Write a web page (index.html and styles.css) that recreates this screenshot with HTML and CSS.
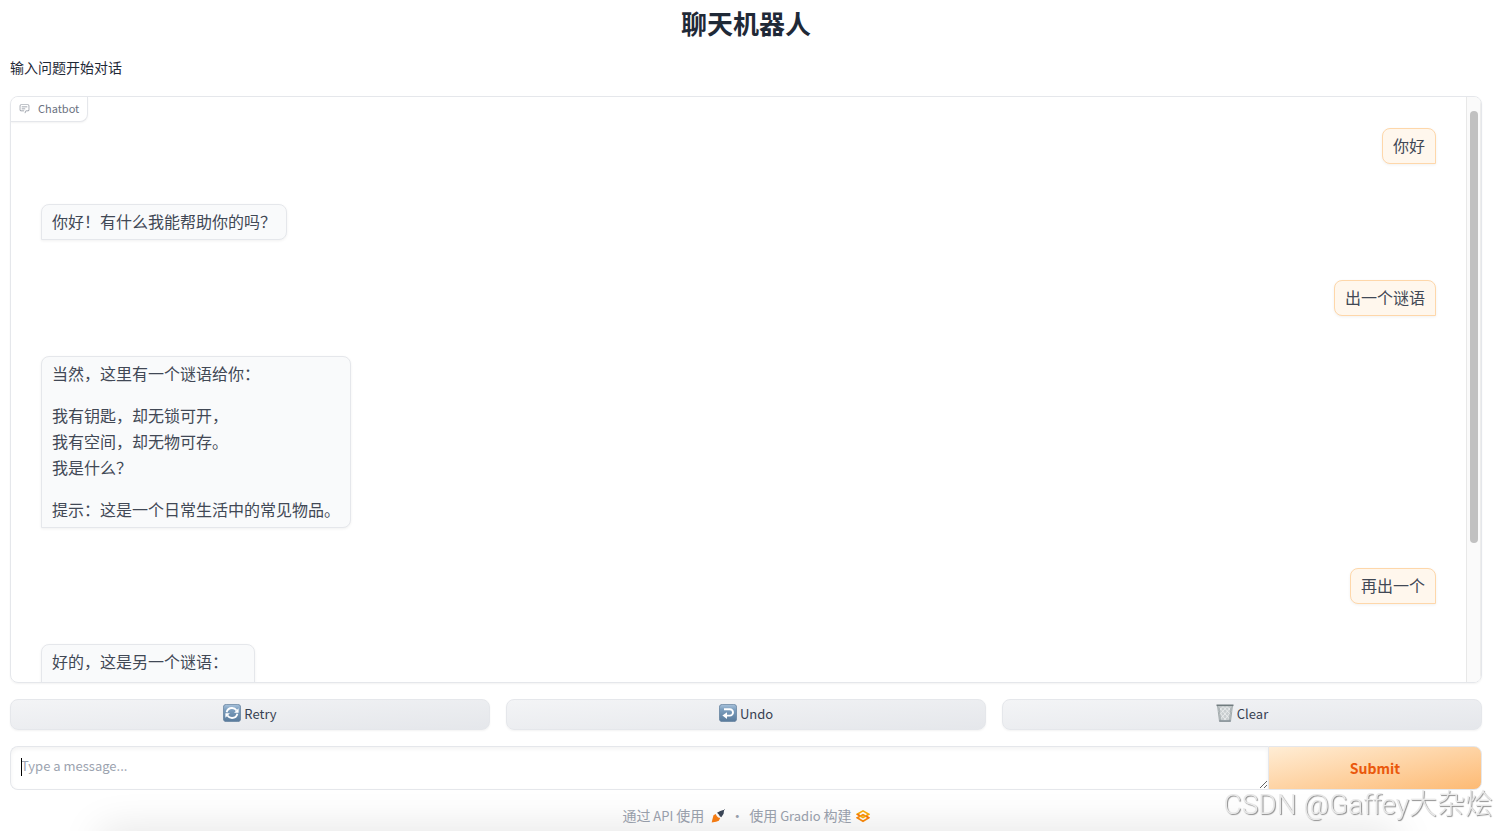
FILE: index.html
```
<!DOCTYPE html>
<html lang="zh-CN">
<head>
    <meta charset="UTF-8">
    <meta name="viewport" content="width=device-width, initial-scale=1.0">
    <title>聊天机器人</title>
    <link rel="stylesheet" href="styles.css">
</head>
<body>
    <main class="app">
        <h1 class="title">聊天机器人</h1>
        <p class="description">输入问题开始对话</p>

        <!-- Chat history -->
        <section class="chatbot" aria-label="Chatbot">
            <div class="chatbot-label">
                <svg class="label-icon" viewBox="0 0 32 32" fill="currentColor" aria-hidden="true">
                    <path d="M17.74 30 16 29l4-7h6a2 2 0 0 0 2-2V8a2 2 0 0 0-2-2H6a2 2 0 0 0-2 2v12a2 2 0 0 0 2 2h9v2H6a4 4 0 0 1-4-4V8a4 4 0 0 1 4-4h20a4 4 0 0 1 4 4v12a4 4 0 0 1-4 4h-4.840Z"/>
                    <path d="M8 10h16v2H8zM8 16h10v2H8z"/>
                </svg>
                <span>Chatbot</span>
            </div>
            <div class="messages">
                <div class="bubble user"><p>你好</p></div>
                <div class="bubble bot"><p>你好！有什么我能帮助你的吗？</p></div>
                <div class="bubble user"><p>出一个谜语</p></div>
                <div class="bubble bot">
                    <p>当然，这里有一个谜语给你：</p>
                    <p>我有钥匙，却无锁可开，<br>我有空间，却无物可存。<br>我是什么？</p>
                    <p>提示：这是一个日常生活中的常见物品。</p>
                </div>
                <div class="bubble user"><p>再出一个</p></div>
                <div class="bubble bot bubble-long"><p>好的，这是另一个谜语：</p></div>
            </div>
            <div class="scrollbar"><div class="scrollbar-thumb"></div></div>
        </section>

        <div class="actions">
            <button type="button" class="btn btn-secondary">
                <svg class="btn-icon" viewBox="0 0 18 18" aria-hidden="true">
                    <defs>
                        <linearGradient id="tile" x1="0" y1="0" x2="0" y2="1">
                            <stop offset="0" stop-color="#a9c3dc"/>
                            <stop offset="0.3" stop-color="#7d9fbf"/>
                            <stop offset="1" stop-color="#587a9b"/>
                        </linearGradient>
                    </defs>
                    <rect x="0.4" y="0.4" width="17.200" height="17.200" rx="2.800" fill="url(#tile)" stroke="#64819e" stroke-width="0.800"/>
                    <path d="M3.600 8.200C4.300 5.400 6.500 4 9 4c2 0 3.600.9 4.600 2.400M14.400 9.800C13.700 12.600 11.500 14 9 14c-2 0-3.600-.9-4.600-2.400" fill="none" stroke="#fff" stroke-width="1.800"/>
                    <path d="M15.600 4.300v4.500h-4.500zM2.400 13.700V9.200h4.500z" fill="#fff"/>
                </svg>
                Retry
            </button>
            <button type="button" class="btn btn-secondary">
                <svg class="btn-icon" viewBox="0 0 18 18" aria-hidden="true">
                    <rect x="0.4" y="0.4" width="17.200" height="17.200" rx="2.800" fill="url(#tile)" stroke="#64819e" stroke-width="0.800"/>
                    <path d="M5 5.200h5.800a3.200 3.200 0 0 1 0 6.400H7" fill="none" stroke="#fff" stroke-width="1.900"/>
                    <path d="M8 8.200v6.800l-4.600-3.400z" fill="#fff"/>
                </svg>
                Undo
            </button>
            <button type="button" class="btn btn-secondary">
                <svg class="btn-icon" viewBox="0 0 18 18" aria-hidden="true">
                    <path d="M1.500 1.500h15l-2 16h-11z" fill="#c9ced0" stroke="#8d9698" stroke-width="0.700"/>
                    <path d="M3 3l10.500 12M7 2.500l7.500 8M11 2.500l4 4.500M3 7.500l7 9M15 3L4.500 15M11 2.500L3.500 11M7 2.500L3 7M15 7.500l-7 9" fill="none" stroke="#f3f5f5" stroke-width="0.700"/>
                    <path d="M3 3l1.500 13.500M15 3l-1.500 13.500" fill="none" stroke="#9ca5a7" stroke-width="0.800"/>
                    <path d="M0.500 0.500h17v1.600h-17z" fill="#707b7e"/>
                    <path d="M3.500 16.300h11v1.200h-11z" fill="#7f8b92"/>
                </svg>
                Clear
            </button>
        </div>

        <form class="composer">
            <textarea class="message-input" rows="1" aria-label="Message" placeholder="Type a message..."></textarea>
            <span class="caret"></span>
            <button type="button" class="btn btn-primary">Submit</button>
        </form>

        <footer class="footer">
            <a href="#">
                <span>通过<span class="latin"> API </span>使用</span>
                <svg class="footer-icon api-icon" viewBox="0 0 14 14" aria-hidden="true">
                    <path d="M6 3.800 9.300 2l3-1 .7.500-.4 3.200-2.300 3.600-1.500-1-1-1.800z" fill="#3d4859"/>
                    <path d="M11.800 2.200 13.600.600" stroke="#3d4859" stroke-width="1"/>
                    <path d="M2.500 6.200 4.800 5l.9 2 1.500 1.500 2 .6-1.400 2.600-2.700 1-1.600.2L.700 13.400l.6-2.600z" fill="#fb7f14"/>
                </svg>
            </a>
            <span class="divider">·</span>
            <a href="#">
                <span>使用<span class="latin"> Gradio </span>构建</span>
                <svg class="footer-icon" viewBox="0 0 14 14" aria-hidden="true">
                    <path d="M1.200 8.800 7 12.200l5.800-3.400L7 5.700z" fill="none" stroke="#fb8a0c" stroke-width="1.600"/>
                    <path d="M1.200 5.200 7 1.900l5.800 3.300L7 8.500z" fill="none" stroke="#fbae0a" stroke-width="1.600"/>
                    <path d="M1.200 5.200 4 6.900M10 6.900l2.800 1.900" stroke="#f97316" stroke-width="1.500"/>
                </svg>
            </a>
        </footer>
    </main>

    <div class="page-shade"></div>
    <div class="watermark">CSDN @Gaffey大杂烩</div>
</body>
</html>
```

FILE: styles.css
```
* {
    box-sizing: border-box;
}

body {
    margin: 0;
    background: #fff;
    color: #1f2937;
    font-family: "Noto Sans CJK SC", sans-serif;
    font-size: 14px;
    line-height: 20px;
    overflow: hidden;
}

.app {
    display: flex;
    flex-direction: column;
    gap: 16px;
    padding: 4px 15px 0 10px;
}

.title {
    margin: 0;
    font-size: 26px;
    line-height: 38px;
    font-weight: 700;
    text-align: center;
}

.description {
    margin: 0;
    padding-bottom: 4px;
    line-height: 18px;
}

/* Chat history */
.chatbot {
    position: relative;
    display: flex;
    height: calc(100vh - 244px);
    border: 1px solid #e5e7eb;
    border-radius: 8px;
    box-shadow: 0 1px 2px rgba(0, 0, 0, 0.05);
    overflow: hidden;
}

.chatbot-label {
    position: absolute;
    top: 0;
    left: 0;
    display: flex;
    align-items: center;
    gap: 8px;
    height: 25px;
    padding: 0 8px 2px;
    border: 1px solid #e5e7eb;
    border-width: 0 1px 1px 0;
    border-radius: 0 0 8px 0;
    box-shadow: 0 1px 2px rgba(0, 0, 0, 0.05);
    background: #fff;
    color: #6b7280;
    font-size: 11px;
}

.label-icon {
    width: 11px;
    height: 11px;
    opacity: 0.8;
}

.messages {
    display: flex;
    flex: 1;
    flex-direction: column;
    gap: 40px;
    padding: 31px 30px;
    overflow: hidden;
}

.bubble {
    flex: none;
    padding: 3px 10px 5px;
    border: 1px solid #e5e7eb;
    border-radius: 8px;
    box-shadow: 0 1px 3px rgba(0, 0, 0, 0.06);
    color: #414855;
    font-size: 16px;
    line-height: 26px;
}

.bubble p {
    margin: 0;
}

.bubble p + p {
    margin-top: 16px;
}

.bot {
    align-self: flex-start;
    border-bottom-left-radius: 0;
    background: #f9fafb;
}

.user {
    align-self: flex-end;
    border-color: #fed7aa;
    border-bottom-right-radius: 0;
    background: #fff7ed;
}

.bubble-long {
    min-width: 214px;
    min-height: 172px;
}

.scrollbar {
    width: 15px;
    padding: 14px 2px 0 3px;
    border-left: 1px solid #e8e8e8;
    border-right: 1px solid #ededed;
    background: #fafafa;
}

.scrollbar-thumb {
    height: calc(76% - 2px);
    border-radius: 4px;
    background: #c1c1c1;
}

/* Buttons */
.btn {
    display: flex;
    align-items: center;
    justify-content: center;
    margin: 0;
    border: 1px solid #e5e7eb;
    font-family: inherit;
    cursor: pointer;
}

.actions {
    display: flex;
    gap: 16px;
}

.btn-secondary {
    flex: 1;
    gap: 3px;
    height: 31px;
    padding: 0 8px 2px;
    border-radius: 8px;
    box-shadow: 0 1px 2px rgba(0, 0, 0, 0.05);
    background: linear-gradient(to bottom right, #f3f4f6, #e5e7eb);
    color: #374151;
    font-size: 13px;
}

.btn-icon {
    width: 18px;
    height: 18px;
    margin-bottom: 2px;
}

.btn-primary {
    width: 214px;
    border-radius: 0 8px 8px 0;
    background: linear-gradient(to bottom right, #ffedd5, #fdba74);
    color: #ea580c;
    font-size: 14px;
    font-weight: 700;
}

/* Message box */
.composer {
    position: relative;
    display: flex;
    height: 44px;
    margin: 0;
}

.message-input {
    flex: 1;
    padding: 9px 10px;
    border: 1px solid #e5e7eb;
    border-right: 0;
    border-radius: 8px 0 0 8px;
    box-shadow: inset 0 2px 4px rgba(0, 0, 0, 0.05);
    background: #fff;
    color: #1f2937;
    font-family: inherit;
    font-size: 13px;
    line-height: 20px;
    outline: none;
    overflow: hidden;
    resize: vertical;
}

.message-input::placeholder {
    color: #9ca3af;
}

.caret {
    position: absolute;
    top: 12px;
    left: 11px;
    width: 1px;
    height: 18px;
    background: #000;
}

.footer {
    display: flex;
    justify-content: center;
    gap: 5px;
    color: #9ca3af;
    line-height: 18px;
}

.footer a {
    display: flex;
    align-items: center;
    gap: 4px;
    color: inherit;
    text-decoration: none;
}

.latin {
    font-size: 13px;
}

.footer-icon {
    width: 14px;
    height: 14px;
}

.api-icon {
    margin-left: 3px;
}

/* Soft shade along the bottom edge of the window */
.page-shade {
    position: fixed;
    right: 100px;
    bottom: -30px;
    left: 100px;
    height: 30px;
    box-shadow: 0 0 40px rgba(0, 0, 0, 0.13);
    pointer-events: none;
}

.watermark {
    position: fixed;
    right: 4px;
    bottom: 6px;
    color: #e9e9e9;
    font-family: Roboto, "Noto Sans CJK SC", sans-serif;
    font-size: 28px;
    font-weight: 300;
    line-height: 40px;
    text-shadow: 1px 1px 1px #8c8c8c;
    pointer-events: none;
}
```
